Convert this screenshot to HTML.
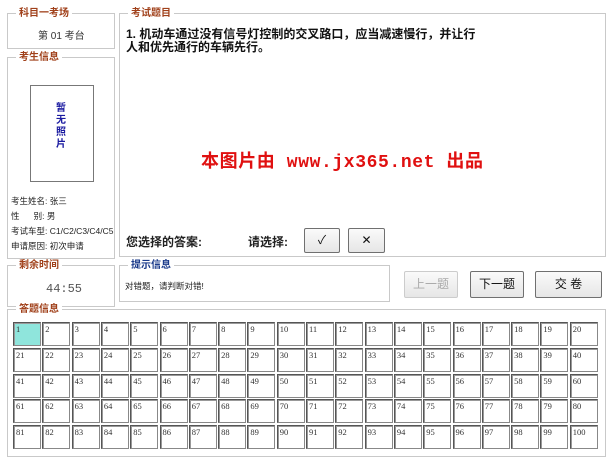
<!DOCTYPE html>
<html><head><meta charset="utf-8"><style>
body{margin:0;width:608px;height:459px;background:#fff;position:relative;overflow:hidden;font-family:"Liberation Sans","Noto Sans CJK SC",sans-serif;}
.fs{position:absolute;border:1px solid #c9c9c9;box-shadow:inset 1px 1px 0 #fff,1px 1px 0 #fff;}
.lg{position:absolute;top:-7px;left:8px;background:#fff;padding:0 3px;font-size:10px;font-weight:bold;color:#a0401a;line-height:13px;}
.t{position:absolute;font-size:8.5px;color:#222;white-space:nowrap;}
.btn{position:absolute;border:1px solid #707070;border-radius:2px;background:linear-gradient(#fafafa,#e6e6e6);font-size:12px;text-align:center;color:#111;box-sizing:border-box;}
.cell{position:absolute;width:28px;height:24px;box-sizing:border-box;border:1px solid #555;border-right-color:#888;border-bottom-color:#888;box-shadow:inset 1px 1px 0 #999;font-size:8.5px;color:#333;padding:1px 0 0 2px;font-family:"Liberation Serif",serif;background:#fff;}
</style></head><body>
<div class="fs" style="left:7px;top:13px;width:106px;height:34px"><div class="lg">科目一考场</div><div class="t" style="left:30px;top:13px;font-size:10px;color:#333">第 01 考台</div></div>
<div class="fs" style="left:7px;top:57px;width:106px;height:200px"><div class="lg">考生信息</div>
<div style="position:absolute;left:22px;top:27px;width:62px;height:95px;border:1px solid #777;"></div>
<div style="position:absolute;left:48px;top:45px;width:12px;font-size:10px;font-weight:bold;color:#1a1aa0;line-height:12px">暂无照片</div>
<div class="t" style="left:3px;top:137px">考生姓名: 张三</div>
<div class="t" style="left:3px;top:152px">性&nbsp;&nbsp;&nbsp;&nbsp;&nbsp;&nbsp;别: 男</div>
<div class="t" style="left:3px;top:167px">考试车型: C1/C2/C3/C4/C5</div>
<div class="t" style="left:3px;top:182px">申请原因: 初次申请</div>
</div>
<div class="fs" style="left:7px;top:265px;width:106px;height:40px"><div class="lg">剩余时间</div><div class="t" style="left:38px;top:16px;font-size:12px;color:#555;font-family:'Liberation Mono',monospace">44:55</div></div>
<div class="fs" style="left:119px;top:13px;width:485px;height:242px"><div class="lg">考试题目</div>
<div style="position:absolute;left:6px;top:14px;font-size:12px;line-height:13px;color:#111;font-weight:bold;">1. 机动车通过没有信号灯控制的交叉路口，应当减速慢行，并让行<br>人和优先通行的车辆先行。</div>
<div style="position:absolute;left:81px;top:133px;font-size:18px;font-weight:bold;color:#e01010;white-space:nowrap;letter-spacing:0.6px;font-family:'Liberation Mono','Noto Sans CJK SC',monospace">本图片由 www.jx365.net 出品</div>
<div style="position:absolute;left:6px;top:219px;font-size:12px;color:#222;font-weight:bold">您选择的答案:</div>
<div style="position:absolute;left:128px;top:219px;font-size:12px;color:#222;font-weight:bold">请选择:</div>
<div class="btn" style="left:184px;top:214px;width:36px;height:25px;line-height:23px">✓</div>
<div class="btn" style="left:228px;top:214px;width:37px;height:25px;line-height:23px">✕</div>
</div>
<div class="fs" style="left:119px;top:265px;width:269px;height:35px"><div class="lg" style="color:#1a3a8a">提示信息</div><div class="t" style="left:5px;top:14px">对错题，请判断对错!</div></div>
<div class="btn" style="left:404px;top:271px;width:54px;height:27px;line-height:25px;color:#aaa;border-color:#ccc">上一题</div>
<div class="btn" style="left:470px;top:271px;width:54px;height:27px;line-height:25px">下一题</div>
<div class="btn" style="left:535px;top:271px;width:67px;height:27px;line-height:25px">交 卷</div>
<div class="fs" style="left:7px;top:309px;width:597px;height:146px"><div class="lg">答题信息</div></div>
<div id="g"></div>
<script>
var h='';for(var r=0;r<5;r++)for(var c=0;c<20;c++){var n=r*20+c+1;h+='<div class="cell" style="left:'+(13+c*29.3).toFixed(1)+'px;top:'+(322+r*25.8).toFixed(1)+'px;'+(n==1?'background:#8fe5dc':'')+'">'+n+'</div>';}
document.getElementById('g').innerHTML=h;
</script>
</body></html>
